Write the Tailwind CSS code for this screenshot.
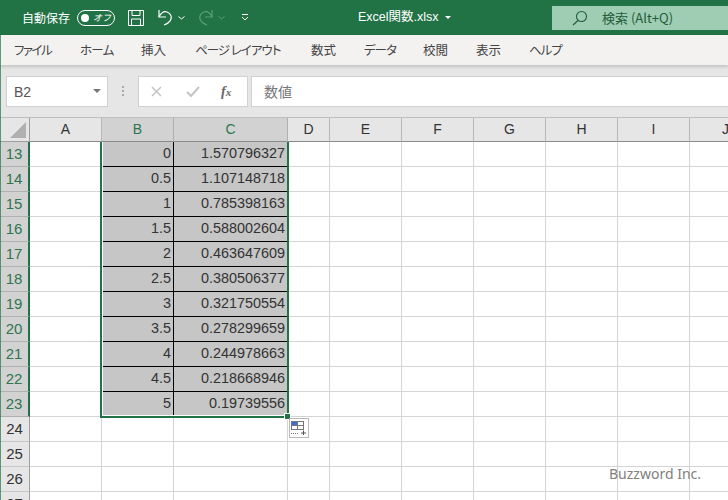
<!DOCTYPE html>
<html lang="ja">
<head>
<meta charset="UTF-8">
<title>Excel関数.xlsx</title>
<script src="https://cdn.jsdelivr.net/npm/@tailwindcss/browser@4"></script>
</head>
<body class="w-[728px] h-[500px] overflow-hidden bg-white font-['Noto_Sans_CJK_JP','Liberation_Sans',sans-serif]">
<div id="app" class="relative w-[728px] h-[500px] overflow-hidden">
  <!-- title bar -->
  <header class="flex items-center h-[35px] bg-[#217346] text-white text-[12px]">
    <span class="ml-[22px] w-[48px] whitespace-nowrap">自動保存</span>
    <div class="ml-[7px] flex items-center justify-between w-[38px] h-[16px] rounded-full border border-white px-[3px]">
      <span class="w-[8px] h-[8px] rounded-full bg-white"></span>
      <span class="text-[9px] italic leading-none">オフ</span>
    </div>
    <svg class="ml-[13px]" width="16" height="16" viewBox="0 0 16 16" fill="none" stroke="#fff" stroke-width="1"><path d="M.5.5h15v15H.5z"/><path d="M4 .5v5h8v-5M3.500 15.500v-6.500h9v6.500"/></svg>
    <svg class="ml-[13px]" width="17" height="17" viewBox="0 0 17 17" fill="none" stroke="#fff" stroke-width="1.200"><path d="M2 1v7h7"/><path d="M2 8c2-4 5-6 8-5s5 4 4 7-4 5-7 6"/></svg>
    <svg class="ml-[4px]" width="7" height="4" viewBox="0 0 7 4" fill="none" stroke="#fff"><path d="M.5.500l3 2.500 3-2.500"/></svg>
    <svg class="ml-[12px]" width="17" height="17" viewBox="0 0 17 17" fill="none" stroke="#5c9d7b" stroke-width="1.200"><path d="M15 1v7H8"/><path d="M15 8c-2-4-5-6-8-5s-5 4-4 7 4 5 7 6"/></svg>
    <svg class="ml-[4px]" width="7" height="4" viewBox="0 0 7 4" fill="none" stroke="#5c9d7b"><path d="M.5.500l3 2.500 3-2.500"/></svg>
    <svg class="ml-[16px]" width="8" height="7" viewBox="0 0 8 7" fill="none" stroke="#fff"><path d="M1 .5h6M1 3l3 3 3-3"/></svg>
    <span class="ml-[109px] w-[81px] whitespace-nowrap text-[12.500px] font-['Liberation_Sans','Noto_Sans_CJK_JP',sans-serif]">Excel関数.xlsx</span>
    <span class="ml-[6px] w-0 h-0 border-x-[3px] border-x-transparent border-t-[3px] border-t-white"></span>
    <div class="ml-[101px] flex items-center w-[176px] h-[24px] mt-[1px] bg-[#9fcdb3] text-[#1f5c3a] text-[13px]">
      <svg class="ml-[20px]" width="16" height="16" viewBox="0 0 16 16" fill="none" stroke="#1f5c3a" stroke-width="1.100"><circle cx="9.500" cy="6.500" r="5"/><path d="M6 10.500L1 15"/></svg>
      <span class="ml-[14px] whitespace-nowrap">検索 (Alt+Q)</span>
    </div>
  </header>

  <!-- ribbon tabs -->
  <nav class="flex items-center h-[30px] pl-[14px] bg-[#f3f2f1] text-[12.500px] text-[#444] whitespace-nowrap [font-feature-settings:'palt'] shadow-[0_2px_3px_rgba(0,0,0,0.15)] relative">
    <span class="w-[66px] tracking-[-1.500px]">ファイル</span>
    <span class="w-[61px] tracking-[-0.700px]">ホーム</span>
    <span class="w-[54px]">挿入</span>
    <span class="w-[116px] tracking-[-1px]">ページ レイアウト</span>
    <span class="w-[53px]">数式</span>
    <span class="w-[59px] tracking-[-1px]">データ</span>
    <span class="w-[53px]">校閲</span>
    <span class="w-[53px]">表示</span>
    <span class="w-[53px] tracking-[-1px]">ヘルプ</span>
  </nav>

  <!-- formula bar -->
  <div class="flex items-center h-[52px] bg-[#e6e6e6] text-[#777]">
    <div class="ml-[6px] flex items-center justify-between w-[102px] h-[31px] bg-white border border-[#d0d0d0] pl-[7px] pr-[6px] text-[14px] text-[#555] font-['Liberation_Sans',sans-serif]">
      <span class="pt-[2px]">B2</span>
      <span class="w-0 h-0 border-x-[4px] border-x-transparent border-t-[4px] border-t-[#777]"></span>
    </div>
    <div class="mx-[14px] flex flex-col gap-[2px]">
      <span class="w-[2px] h-[2px] bg-[#aaa]"></span><span class="w-[2px] h-[2px] bg-[#aaa]"></span><span class="w-[2px] h-[2px] bg-[#aaa]"></span>
    </div>
    <div class="flex items-center w-[110px] h-[31px] bg-white border border-[#d0d0d0]">
      <svg class="ml-[12px]" width="11" height="11" viewBox="0 0 11 11" stroke="#c4c4c4" stroke-width="1.500"><path d="M1 1l9 9M10 1l-9 9"/></svg>
      <svg class="ml-[24px]" width="14" height="11" viewBox="0 0 14 11" fill="none" stroke="#c4c4c4" stroke-width="2"><path d="M1 6l4 4 8-9"/></svg>
      <span class="ml-[21px] text-[14px] font-bold italic text-[#666] font-['Liberation_Serif',serif]">f<span class="text-[11px]">x</span></span>
    </div>
    <div class="ml-[3px] flex items-center flex-1 h-[31px] bg-white border-y border-l border-[#d0d0d0] pl-[12px] text-[14px] text-[#777]">数値</div>
  </div>

  <!-- column headers -->
  <div id="cols" class="flex h-[25px] bg-[#e6e6e6] border-t border-[#bfbfbf] text-[14px] text-[#333] font-['Liberation_Sans',sans-serif]"></div>
  <div id="rows" class="font-['Liberation_Sans',sans-serif] text-[14.400px]"></div>

  <!-- window edge -->
  <div class="absolute left-0 top-[35px] bottom-0 w-[1px] bg-[#217346]/70"></div>

  <!-- selection box, its top is scrolled out of view -->
  <div class="absolute left-[100px] top-[142px] w-[189px] h-[276px] border-x-2 border-b-2 border-[#217346] shadow-[inset_1px_0_0_#fff,inset_0_-1px_0_#fff] pointer-events-none"></div>
  <div class="absolute left-[284px] top-[413px] w-[5px] h-[5px] bg-[#217346] border border-white box-content"></div>

  <!-- quick analysis button -->
  <div class="absolute left-[289px] top-[418px] w-[20px] h-[20px] bg-white border border-[#b8b8b8] flex items-center justify-center">
    <svg width="16" height="14" viewBox="0 0 16 14" fill="none"><rect x=".5" y=".5" width="12" height="8" stroke="#777"/><rect x="1" y="1" width="5.500" height="3.500" fill="#3b6fd6"/><path d="M6.500.5v8M.5 4.500h12" stroke="#777"/><path d="M0 12.500h8" stroke="#777" stroke-dasharray="1 1"/><path d="M12.500 9.500v4.500M10 12h5" stroke="#555"/></svg>
  </div>

  <span class="absolute left-[609px] top-[465px] text-[14px] leading-[18px] text-[#808080] font-['Noto_Sans',sans-serif]">Buzzword Inc.</span>
</div>
<script>
// column widths come from the sheet
const cols = [['A',72],['B',72],['C',114],['D',42],['E',72],['F',72],['G',72],['H',72],['I',72],['J',72]];
const data = {13:['0','1.570796327'],14:['0.5','1.107148718'],15:['1','0.785398163'],16:['1.5','0.588002604'],17:['2','0.463647609'],18:['2.5','0.380506377'],19:['3','0.321750554'],20:['3.5','0.278299659'],21:['4','0.244978663'],22:['4.5','0.218668946'],23:['5','0.19739556']};

let head = `<div class="relative shrink-0 w-[30px] border-r border-b border-[#9e9e9e]"><span class="absolute right-[3px] bottom-[3px] w-0 h-0 border-l-[16px] border-l-transparent border-b-[16px] border-b-[#b0b0b0]"></span></div>`;
cols.forEach(([name, w]) => {
  const sel = name === 'B' || name === 'C';
  head += `<div style="width:${w}px" class="shrink-0 flex items-center justify-center border-r border-b border-b-[#8a8a8a] ${sel ? 'bg-[#d2d2d2] text-[#2f7550] border-r-[#b0b0b0]' : 'border-r-[#b8b8b8]'}">${name}</div>`;
});
document.getElementById('cols').innerHTML = head;

let rows = '';
for (let r = 13; r <= 27; r++) {
  const sel = data[r];
  rows += `<div class="flex h-[25px]"><div class="shrink-0 w-[30px] flex items-center justify-center text-[15px] border-r border-b ${sel ? 'bg-[#d2d2d2] text-[#2f7550] border-r-2 border-r-[#217346] border-b-[#b0b0b0]' : 'bg-[#e6e6e6] text-[#333] border-r-[#9e9e9e] border-b-[#c6c6c6]'}">${r}</div>`;
  cols.forEach(([name, w], i) => {
    const inSel = sel && (name === 'B' || name === 'C');
    const val = inSel ? data[r][name === 'B' ? 0 : 1] : '';
    rows += `<div style="width:${w}px" class="shrink-0 flex items-center justify-end pr-[2px] border-r border-b ${inSel ? 'bg-[#c6c6c6] text-[#333] border-black' : 'border-[#d4d4d4]'}">${val}</div>`;
  });
  rows += `</div>`;
}
document.getElementById('rows').innerHTML = rows;
</script>
</body>
</html>
